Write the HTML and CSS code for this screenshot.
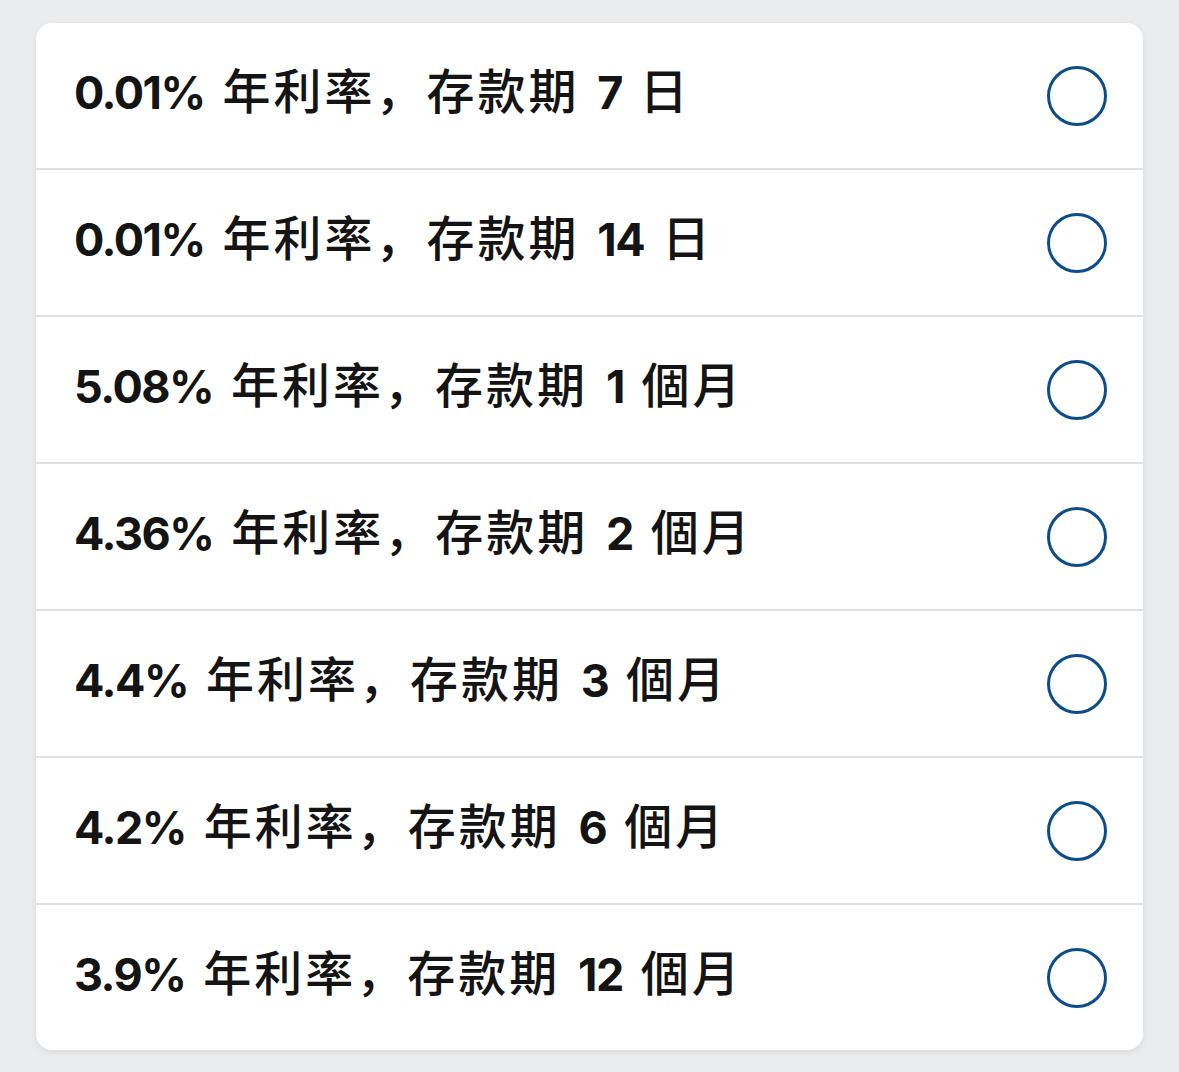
FILE: index.html
```html
<!DOCTYPE html>
<html lang="zh">
<head>
    <meta charset="UTF-8">
    <meta name="viewport" content="width=device-width, initial-scale=1.0">
    <title>存款期</title>
    <link rel="stylesheet" href="styles.css">
</head>
<body>
    <div class="card">
        <label class="option"><span class="label"><span class="num">0.01%</span> 年利率，存款期 <span class="num">7</span> 日</span><span class="radio"></span></label>
        <label class="option"><span class="label"><span class="num">0.01%</span> 年利率，存款期 <span class="num">14</span> 日</span><span class="radio"></span></label>
        <label class="option"><span class="label"><span class="num">5.08%</span> 年利率，存款期 <span class="num">1</span> 個月</span><span class="radio"></span></label>
        <label class="option"><span class="label"><span class="num">4.36%</span> 年利率，存款期 <span class="num">2</span> 個月</span><span class="radio"></span></label>
        <label class="option"><span class="label"><span class="num">4.4%</span> 年利率，存款期 <span class="num">3</span> 個月</span><span class="radio"></span></label>
        <label class="option"><span class="label"><span class="num">4.2%</span> 年利率，存款期 <span class="num">6</span> 個月</span><span class="radio"></span></label>
        <label class="option"><span class="label"><span class="num">3.9%</span> 年利率，存款期 <span class="num">12</span> 個月</span><span class="radio"></span></label>
    </div>
</body>
</html>
```
FILE: styles.css
```css
body {
    margin: 0;
    padding: 23px 36px 0 36px;
    background-color: #ebecee;
    font-family: "Noto Sans CJK SC", sans-serif;
    height: 1072px;
    box-sizing: border-box;
}
.card {
    background-color: #fff;
    border-radius: 16px;
    box-shadow: 0 2px 6px rgba(0, 0, 0, 0.08);
    overflow: hidden;
}
.option {
    display: flex;
    align-items: center;
    justify-content: space-between;
    height: 145px;
    padding: 0 36px 0 38px;
    border-bottom: 2px solid #dfe0e2;
}
.option:last-child {
    border-bottom: none;
}
.label {
    font-size: 48px;
    font-weight: 500;
    color: #141414;
    letter-spacing: 3px;
    word-spacing: 4px;
    margin-top: -15px;
    white-space: nowrap;
}
.num {
    font-family: Inter, sans-serif;
    font-size: 45px;
    font-weight: 700;
    letter-spacing: -1.5px;
}
.radio {
    width: 54px;
    height: 54px;
    border: 3px solid #0b4c8c;
    border-radius: 50%;
}
```
